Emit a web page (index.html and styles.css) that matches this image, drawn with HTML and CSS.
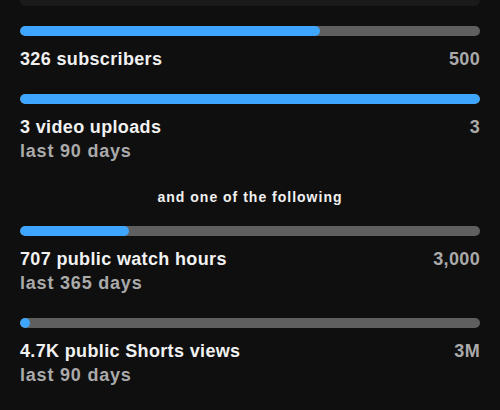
FILE: index.html
```html
<!DOCTYPE html>
<html lang="en">
<head>
    <meta charset="UTF-8">
    <meta name="viewport" content="width=device-width, initial-scale=1.0">
    <title>Eligibility progress</title>
    <link rel="stylesheet" href="styles.css">
</head>
<body>
    <div class="panel">
        <div class="card-edge"></div>

        <div class="goal">
            <div class="bar"><span class="fill" style="width: 65.2%"></span></div>
            <div class="row">
                <span class="title">326 subscribers</span>
                <span class="value">500</span>
            </div>
        </div>

        <div class="goal">
            <div class="bar"><span class="fill" style="width: 100%"></span></div>
            <div class="row">
                <span class="title">3 video uploads</span>
                <span class="value">3</span>
            </div>
            <div class="sub">last 90 days</div>
        </div>

        <p class="divider">and one of the following</p>

        <div class="goal">
            <div class="bar"><span class="fill" style="width: 23.6%"></span></div>
            <div class="row">
                <span class="title">707 public watch hours</span>
                <span class="value">3,000</span>
            </div>
            <div class="sub">last 365 days</div>
        </div>

        <div class="goal">
            <div class="bar"><span class="fill" style="width: 0.2%"></span></div>
            <div class="row">
                <span class="title">4.7K public Shorts views</span>
                <span class="value">3M</span>
            </div>
            <div class="sub">last 90 days</div>
        </div>
    </div>
</body>
</html>
```

FILE: styles.css
```css
body {
    margin: 0;
    background: #0f0f0f;
    font-family: "Liberation Sans", Arial, sans-serif;
    color: #f1f1f1;
}

.panel {
    padding: 0 20px;
}

.card-edge {
    height: 6px;
    background: #1a1a1a;
    border-radius: 0 0 12px 12px;
    margin-bottom: 20px;
}

.goal {
    margin-bottom: 23px;
}

.bar {
    height: 10px;
    background: #5f5f5f;
    border-radius: 5px;
    overflow: hidden;
    margin-bottom: 11px;
}

.bar .fill {
    display: block;
    height: 100%;
    min-width: 10px;
    background: #3ea6ff;
    border-radius: 5px;
}

.row {
    display: flex;
    justify-content: space-between;
    align-items: baseline;
}

.title, .value, .sub {
    font-size: 18px;
    line-height: 24px;
    font-weight: bold;
    letter-spacing: 0.35px;
}

.value, .sub {
    color: #aaaaaa;
}

.sub {
    letter-spacing: 0.8px;
}

.divider {
    margin: 24px 0 19px;
    text-align: center;
    font-size: 14px;
    line-height: 20px;
    font-weight: bold;
    letter-spacing: 1px;
}
```
